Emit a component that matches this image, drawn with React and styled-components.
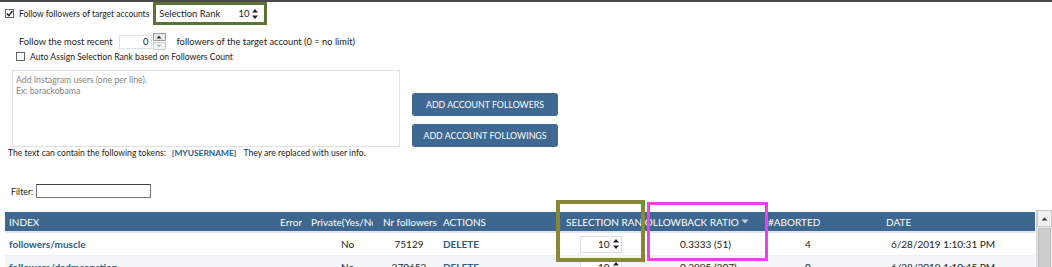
import React from 'react';
import styled, { createGlobalStyle } from 'styled-components';

const GlobalStyle = createGlobalStyle`
  html, body {
    margin: 0;
    padding: 0;
    background: #fff;
  }
  body {
    font-family: Lato, "Open Sans", sans-serif;
    font-size: 10px;
    color: #222;
  }
`;

const Page = styled.div`
  width: 1052px;
  height: 267px;
  overflow: hidden;
  border-top: 2px solid #4a4a4a;
  box-sizing: border-box;
`;

const TopRow = styled.div`
  display: flex;
  align-items: center;
  height: 23px;
  padding-left: 5px;
  font-size: 8.5px;
`;

const CheckBox = styled.span`
  display: inline-flex;
  align-items: center;
  justify-content: center;
  width: 7px;
  height: 7px;
  border: 1px solid #666;
  background: #fff;
  margin-right: 5px;
  flex: none;
`;

const Label = styled.span`
  white-space: nowrap;
`;

const RankBox = styled.div`
  display: flex;
  align-items: center;
  margin-left: 4px;
  height: 17px;
  width: 101px;
  padding: 0 4px 0 3px;
  border: 3px solid #5a7233;
  box-sizing: content-box;
  font-size: 9.4px;
`;

const SpinWrap = styled.div`
  display: flex;
  align-items: center;
  margin-left: auto;
  height: 15px;
  background: #fff;
  width: ${(p) => p.$w}px;
  box-sizing: border-box;
`;

const SpinValue = styled.span`
  flex: 1;
  text-align: right;
  padding-right: 2px;
`;

const Arrows = styled.span`
  display: flex;
  flex-direction: column;
  justify-content: center;
  width: 9px;
  height: 13px;
`;

const RecentRow = styled.div`
  display: flex;
  align-items: center;
  height: 17px;
  margin-top: 8px;
  padding-left: 19px;
  font-size: 9.3px;
`;

const RecentInput = styled.div`
  display: flex;
  align-items: center;
  margin: 0 11px 0 6px;
`;

const RecentBox = styled.span`
  width: 33px;
  height: 14px;
  border: 1px solid #e0e3e6;
  box-sizing: border-box;
  text-align: right;
  padding-right: 2px;
  line-height: 12px;
`;

const StepButtons = styled.span`
  display: flex;
  flex-direction: column;
  gap: 1px;
  margin-left: 1px;
`;

const StepButton = styled.span`
  width: 11px;
  height: 6px;
  border: 1px solid ${(p) => (p.$dim ? '#c8ccd0' : '#9ca0a4')};
  background: ${(p) => (p.$dim ? '#f5f5f5' : '#e8e8e8')};
  display: flex;
  align-items: center;
  justify-content: center;
`;

const AutoRow = styled.div`
  display: flex;
  align-items: center;
  height: 13px;
  padding-left: 16px;
  font-size: 8.6px;
`;

const FormRow = styled.div`
  display: flex;
  align-items: flex-start;
  margin-top: 7px;
  padding-left: 12px;
`;

const Area = styled.div`
  width: 388px;
  height: 77px;
  border: 1px solid #e0e0e0;
  box-sizing: border-box;
  padding: 3px 3px;
  color: #858585;
  font-size: 8.7px;
  line-height: 11px;
`;

const Buttons = styled.div`
  display: flex;
  flex-direction: column;
  gap: 8px;
  margin: 23px 0 0 12px;
`;

const Button = styled.button`
  width: 146px;
  height: 23px;
  border: none;
  border-radius: 3px;
  background: #3f6893;
  color: #fff;
  font-family: inherit;
  font-size: 8.8px;
  padding: 0;
  cursor: pointer;
`;

const Tokens = styled.div`
  display: flex;
  align-items: center;
  padding-left: 8px;
  height: 12px;
  font-size: 8.6px;
  white-space: nowrap;
`;

const Token = styled.span`
  color: #2c5d8f;
  font-weight: 700;
  font-size: 8.4px;
  margin: 0 7px 0 6px;
`;

const FilterRow = styled.div`
  display: flex;
  align-items: center;
  margin-top: 25px;
  padding-left: 11px;
  font-size: 8.8px;
`;

const FilterInput = styled.span`
  width: 115px;
  height: 14px;
  margin-left: 3px;
  border: 1px solid #777;
  border-top-color: #444;
  box-sizing: border-box;
`;

const TableArea = styled.div`
  display: flex;
  margin-top: 14px;
  padding-left: 5px;
  position: relative;
`;

const Table = styled.div`
  width: 1030px;
`;

const cols = '271px 31px 72px 60px 117px 89px 120px 117px 153px';

const HeadRow = styled.div`
  display: grid;
  grid-template-columns: ${cols};
  height: 19px;
  background: #3e6790;
  color: #fff;
  border-bottom: 2px solid #dfe7ee;
`;

const HeadCell = styled.div`
  display: flex;
  align-items: center;
  justify-content: ${(p) => p.$justify || 'flex-start'};
  padding-left: ${(p) => p.$pad ?? 4}px;
  padding-right: ${(p) => p.$padRight ?? 0}px;
  overflow: hidden;
  white-space: nowrap;
`;

const HeadText = styled.span`
  overflow: hidden;
  min-width: ${(p) => (p.$shrink ? 0 : 'auto')};
  flex: none;
  max-width: ${(p) => (p.$shrink ? '100%' : 'none')};
`;

const BodyRow = styled.div`
  display: grid;
  grid-template-columns: ${cols};
  height: 22px;
  background: ${(p) => (p.$alt ? '#f2f6f8' : '#fff')};
  border-bottom: 1px solid #eef1f3;
`;

const Cell = styled.div`
  display: flex;
  align-items: center;
  justify-content: ${(p) => p.$justify || 'flex-start'};
  padding-left: ${(p) => p.$pad ?? 4}px;
  overflow: hidden;
  white-space: nowrap;
  color: ${(p) => (p.$link ? '#2e5c8c' : '#222')};
  font-weight: ${(p) => (p.$link ? 700 : 400)};
`;

const CellSpin = styled.div`
  display: flex;
  align-items: center;
  width: 42px;
  height: 17px;
  border: 1px solid #dde1e4;
  box-sizing: border-box;
  background: #fff;
`;

const Scrollbar = styled.div`
  width: 17px;
  margin-left: 1px;
  margin-top: -2px;
  height: 60px;
  background: #e9e9e9;
  border-left: 1px solid #d0d0d0;
  display: flex;
  flex-direction: column;
`;

const ScrollButton = styled.div`
  height: 15px;
  display: flex;
  align-items: center;
  justify-content: center;
  background: #f0f0f0;
  border: 1px solid #c9c9c9;
`;

const ScrollThumb = styled.div`
  flex: 1;
  margin: 1px 1px 0;
  background: #cdcdcd;
  border: 1px solid #bcbcbc;
`;

const Highlight = styled.div`
  position: absolute;
  pointer-events: none;
  border: ${(p) => p.$bw}px solid ${(p) => p.$color};
  left: ${(p) => p.$x}px;
  top: ${(p) => p.$y}px;
  width: ${(p) => p.$w}px;
  height: ${(p) => p.$h}px;
  box-sizing: border-box;
`;

const Tick = () => (
  <svg width="7" height="7" viewBox="0 0 7 7">
    <path d="M0.8 3.6 L2.8 5.6 L6.4 1" fill="none" stroke="#222" strokeWidth="1.4" />
  </svg>
);

const UpDown = () => (
  <Arrows>
    <svg width="8" height="5" viewBox="0 0 8 5">
      <path d="M1 4.5 L4 1 L7 4.5 Z" fill="#222" />
    </svg>
    <svg width="8" height="5" viewBox="0 0 8 5" style={{ marginTop: 2 }}>
      <path d="M1 0.5 L4 4 L7 0.5 Z" fill="#222" />
    </svg>
  </Arrows>
);

const Spin = ({ value, w }) => (
  <SpinWrap $w={w}>
    <SpinValue>{value}</SpinValue>
    <UpDown />
  </SpinWrap>
);

const columns = [
  { title: 'INDEX' },
  { title: 'Error' },
  { title: 'Private(Yes/No)', padRight: 6, shrink: true },
  { title: 'Nr followers' },
  { title: 'ACTIONS' },
  { title: 'SELECTION RANK', pad: 10, padRight: 4, shrink: true },
  { title: 'FOLLOWBACK RATIO', justify: 'center', pad: 0, padRight: 22, sort: true },
  { title: '#ABORTED', pad: 3 },
  { title: 'DATE', pad: 4 },
];

const rows = [
  {
    index: 'followers/muscle',
    priv: 'No',
    followers: '75129',
    rank: '10',
    ratio: '0.3333 (51)',
    aborted: '4',
    date: '6/28/2019 1:10:31 PM',
  },
  {
    index: 'followers/dadmeanstion',
    priv: 'No',
    followers: '270652',
    rank: '10',
    ratio: '0.2995 (207)',
    aborted: '0',
    date: '6/28/2019 1:10:45 PM',
  },
];

const App = () => (
  <Page>
    <GlobalStyle />
    <TopRow>
      <CheckBox><Tick /></CheckBox>
      <Label>Follow followers of target accounts</Label>
      <RankBox>
        <Label>Selection Rank</Label>
        <Spin value="10" w={34} />
      </RankBox>
    </TopRow>

    <RecentRow>
      <Label>Follow the most recent</Label>
      <RecentInput>
        <RecentBox>0</RecentBox>
        <StepButtons>
          <StepButton>
            <svg width="6" height="4" viewBox="0 0 6 4"><path d="M0.5 3.5 L3 0.5 L5.5 3.5 Z" fill="#333" /></svg>
          </StepButton>
          <StepButton $dim>
            <svg width="6" height="4" viewBox="0 0 6 4"><path d="M0.5 0.5 L3 3.5 L5.5 0.5 Z" fill="#b5b9bd" /></svg>
          </StepButton>
        </StepButtons>
      </RecentInput>
      <Label>followers of the target account (0 = no limit)</Label>
    </RecentRow>

    <AutoRow>
      <CheckBox />
      <Label>Auto Assign Selection Rank based on Followers Count</Label>
    </AutoRow>

    <FormRow>
      <Area>
        Add Instagram users (one per line).
        <br />
        Ex: barackobama
      </Area>
      <Buttons>
        <Button>ADD ACCOUNT FOLLOWERS</Button>
        <Button>ADD ACCOUNT FOLLOWINGS</Button>
      </Buttons>
    </FormRow>

    <Tokens>
      The text can contain the following tokens:
      <Token>[MYUSERNAME]</Token>
      They are replaced with user info.
    </Tokens>

    <FilterRow>
      <Label>Filter:</Label>
      <FilterInput />
    </FilterRow>

    <TableArea>
      <Table>
        <HeadRow>
          {columns.map((c) => (
            <HeadCell key={c.title} $justify={c.justify} $pad={c.pad} $padRight={c.padRight}>
              <HeadText $shrink={c.shrink}>{c.title}</HeadText>
              {c.sort && (
                <svg width="8" height="5" viewBox="0 0 8 5" style={{ marginLeft: 2, flex: 'none' }}>
                  <path d="M0.5 0.5 L7.5 0.5 L4 4.5 Z" fill="#c8d4e0" />
                </svg>
              )}
            </HeadCell>
          ))}
        </HeadRow>
        {rows.map((r, i) => (
          <BodyRow key={r.index} $alt={i % 2 === 1}>
            <Cell $link>{r.index}</Cell>
            <Cell />
            <Cell $pad={34}>{r.priv}</Cell>
            <Cell $justify="center" $pad={0}>{r.followers}</Cell>
            <Cell $link>DELETE</Cell>
            <Cell $justify="center" $pad={0}>
              <CellSpin>
                <SpinValue>{r.rank}</SpinValue>
                <UpDown />
              </CellSpin>
            </Cell>
            <Cell $pad={35}>{r.ratio}</Cell>
            <Cell $pad={40}>{r.aborted}</Cell>
            <Cell $pad={9}>{r.date}</Cell>
          </BodyRow>
        ))}
      </Table>
      <Scrollbar>
        <ScrollButton>
          <svg width="7" height="4" viewBox="0 0 7 4"><path d="M0.5 3.5 L3.5 0.5 L6.5 3.5 Z" fill="#333" /></svg>
        </ScrollButton>
        <ScrollThumb />
      </Scrollbar>
      <Highlight $color="#8a8638" $bw={4} $x={556} $y={-12} $w={89} $h={62} />
      <Highlight $color="#e844e8" $bw={3} $x={647} $y={-10} $w={121} $h={59} />
    </TableArea>
  </Page>
);

export default App;
